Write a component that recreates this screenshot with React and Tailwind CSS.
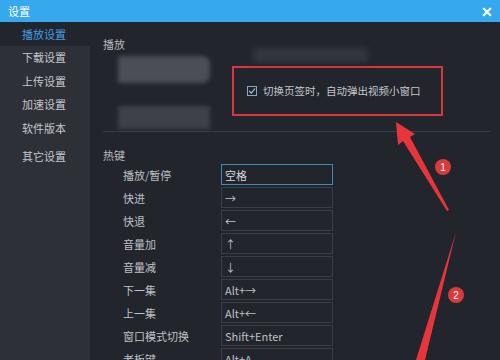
import { useState } from "react";

const menu = ["播放设置", "下载设置", "上传设置", "加速设置", "软件版本", "其它设置"];

const hotkeys = [
  ["播放/暂停", "空格"],
  ["快进", "→"],
  ["快退", "←"],
  ["音量加", "↑"],
  ["音量减", "↓"],
  ["下一集", "Alt+→"],
  ["上一集", "Alt+←"],
  ["窗口模式切换", "Shift+Enter"],
  ["老板键", "Alt+A"],
];

const font = { fontFamily: '"Noto Sans CJK SC", "Noto Sans", sans-serif' };

// annotation arrows and numbered badges drawn over the dialog
const Annotations = () => (
  <svg className="absolute left-0 top-0 pointer-events-none" width="500" height="360" viewBox="0 0 500 360">
    <polygon points="396,122 415,134 410,137 449,210 447,211 403,141 398,145" fill="#e8353b" />
    <polygon points="456,232 455,236 425,360 416,360" fill="#e8353b" />
    <circle cx="443" cy="167" r="8" fill="#d93a3a" />
    <text x="443" y="171" textAnchor="middle" fontSize="10" fill="#fff" fontFamily="Liberation Sans, sans-serif">1</text>
    <circle cx="456" cy="295" r="8" fill="#d93a3a" />
    <text x="456" y="299" textAnchor="middle" fontSize="10" fill="#fff" fontFamily="Liberation Sans, sans-serif">2</text>
  </svg>
);

export default function App() {
  const [active, setActive] = useState(0);
  const [popup, setPopup] = useState(true);

  return (
    <div className="relative w-[500px] h-[360px] overflow-hidden bg-[#22252c] text-[11px] leading-4 text-[#c2c4c8] flex flex-col" style={font}>
      <div className="h-[22px] shrink-0 bg-[#35a8ee] flex items-center justify-between pl-2 pr-[7px] text-white">
        <span>设置</span>
        <span className="text-[14px] font-bold leading-none">✕</span>
      </div>

      <div className="flex flex-1 min-h-0">
        <div className="w-[90px] bg-[#2d3037] flex flex-col">
          {menu.map((m, i) => (
            <button
              key={m}
              onClick={() => setActive(i)}
              className={`text-left pl-[22px] ${i === 5 ? "h-[28px] pt-[4px]" : "h-[23.5px]"} ${
                i === active ? "bg-[#22252c] text-[#3d9fe6]" : "text-[#c6c8cc]"
              }`}
            >
              {m}
            </button>
          ))}
        </div>

        <div className="flex-1 pl-[13px] pr-[10px] pt-[14px]">
          <div className="text-[#b8babe]">播放</div>

          <div className="relative flex h-[79px]">
            <div className="ml-[15px] mt-[4px] w-[92px] flex flex-col gap-[23px] blur-[2px]">
              <div className="h-[27px] bg-[#4b4e57] rounded-r-lg" />
              <div className="h-[23px] bg-[#3e414a]" />
            </div>
            <div className="absolute left-[150px] top-[-4px] w-[115px] h-[14px] bg-[#34373f] blur-[3px]" />
            <div className="ml-[22px] mt-[14px] w-[211px] h-[50px] border-2 border-[#d8383c] flex items-center pl-[13px] gap-[6px]">
              <button
                onClick={() => setPopup(!popup)}
                className="w-[10px] h-[10px] shrink-0 border border-[#8aa6c4] flex items-center justify-center"
              >
                {popup && (
                  <svg width="8" height="8" viewBox="0 0 8 8">
                    <path d="M1.2 4 L3.3 6.2 L7 1.5" stroke="#a9c4e0" strokeWidth="1.2" fill="none" />
                  </svg>
                )}
              </button>
              <span className="whitespace-nowrap text-[10.5px] text-[#c4c6ca]">切换页签时，自动弹出视频小窗口</span>
            </div>
          </div>

          <div className="border-t border-[#3a3d45]" />

          <div className="mt-[15px] text-[#b8babe]">热键</div>

          <div className="mt-[1px] flex flex-col gap-[2px]">
            {hotkeys.map(([label, key], i) => (
              <div key={label} className="flex items-center h-[21px]">
                <span className="ml-[20px] w-[98px] text-[#bfc1c5]">{label}</span>
                <div
                  className={`w-[112px] h-[21px] border px-[3px] flex items-center ${
                    i === 0 ? "border-[#3a8db8] text-[#d4d6da]" : "border-[#3a3d45] text-[#bfc1c5]"
                  }`}
                  style={{ fontFamily: '"Noto Sans CJK SC", "Liberation Sans", sans-serif' }}
                >
                  {key}
                </div>
              </div>
            ))}
          </div>
        </div>
      </div>

      <Annotations />
    </div>
  );
}
